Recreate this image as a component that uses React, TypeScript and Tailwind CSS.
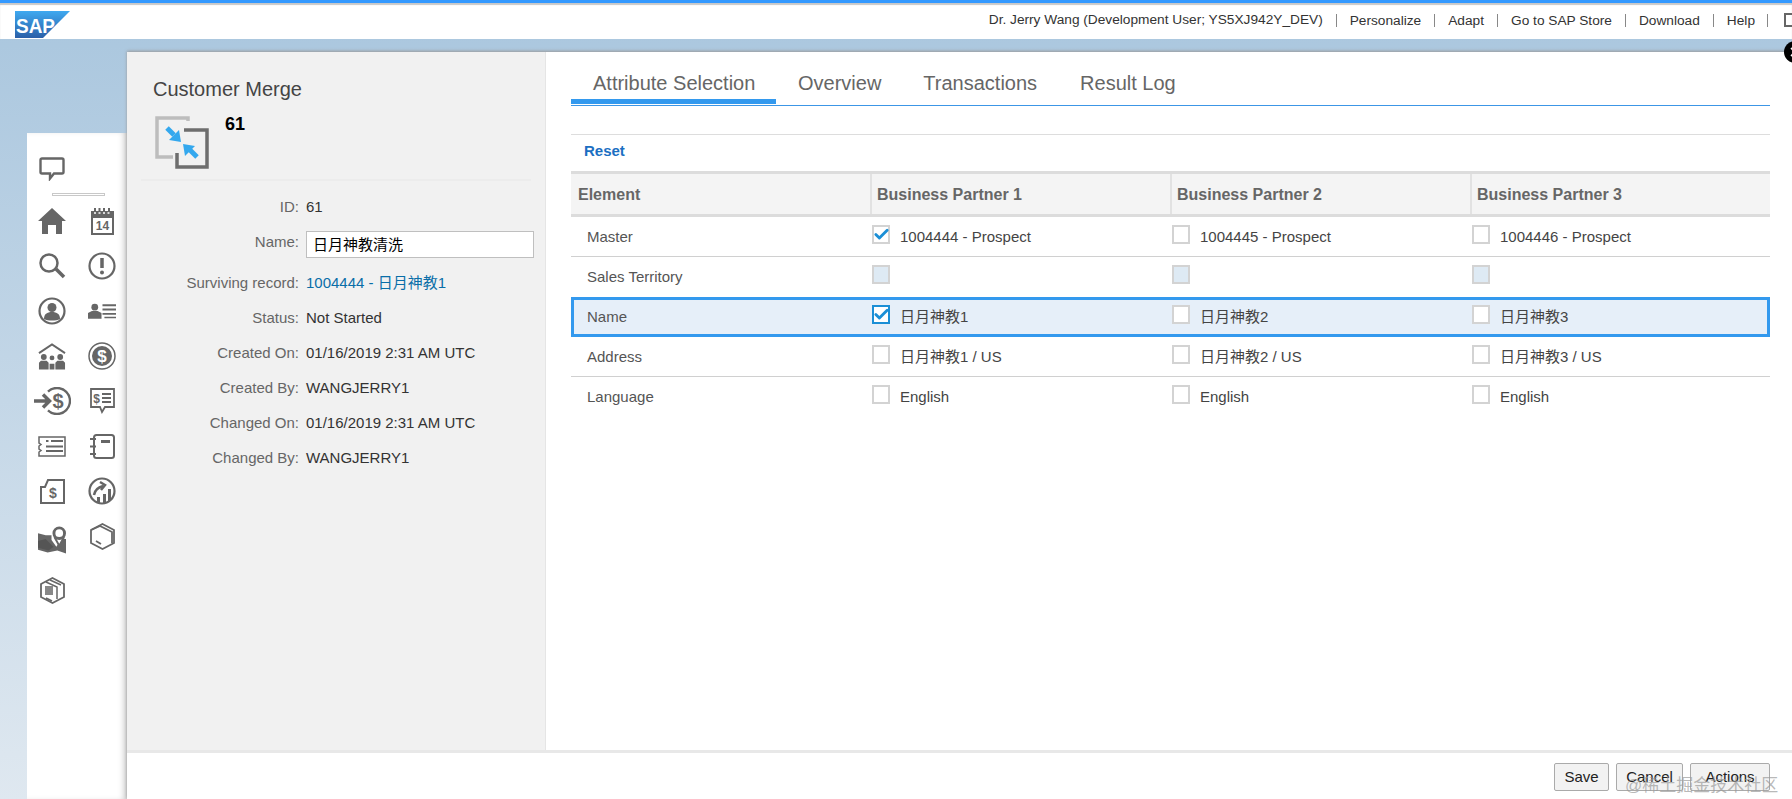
import { Check, X } from "lucide-react";

const fields = [
  { label: "ID:", value: "61" },
  { label: "Name:", input: "日月神教清洗" },
  { label: "Surviving record:", value: "1004444 - 日月神教1", link: true },
  { label: "Status:", value: "Not Started" },
  { label: "Created On:", value: "01/16/2019 2:31 AM UTC" },
  { label: "Created By:", value: "WANGJERRY1" },
  { label: "Changed On:", value: "01/16/2019 2:31 AM UTC" },
  { label: "Changed By:", value: "WANGJERRY1" },
];

const rows = [
  { name: "Master", cells: ["1004444 - Prospect", "1004445 - Prospect", "1004446 - Prospect"], checked: 0 },
  { name: "Sales Territory", cells: ["", "", ""], disabled: true },
  { name: "Name", cells: ["日月神教1", "日月神教2", "日月神教3"], checked: 0, selected: true },
  { name: "Address", cells: ["日月神教1 / US", "日月神教2 / US", "日月神教3 / US"] },
  { name: "Language", cells: ["English", "English", "English"] },
];

const headerLinks = ["Personalize", "Adapt", "Go to SAP Store", "Download", "Help"];

const Comment = () => (
  <svg width="26" height="24" viewBox="0 0 26 24" fill="none">
    <path d="M3 1.5h20a1.5 1.5 0 0 1 1.5 1.5v12a1.5 1.5 0 0 1-1.5 1.5h-8l-4 5v-5H3A1.5 1.5 0 0 1 1.5 15V3A1.5 1.5 0 0 1 3 1.5z" stroke="#666" strokeWidth="2.4" />
  </svg>
);

const icons = [
  <svg key="home" width="28" height="26" viewBox="0 0 28 26" fill="#666"><path d="M14 0 28 13h-4v13h-6v-9h-8v9H4V13H0z" /></svg>,
  <svg key="cal" width="23" height="27" viewBox="0 0 23 27" fill="none">
    <path d="M0 3h23v24H0z" fill="#666" /><path d="M2 10h19v15H2z" fill="#fff" />
    <path d="M4 0v6M8.500 0v6M13 0v6M18 0v6" stroke="#666" strokeWidth="2" />
    <path d="M3 5h17" stroke="#fff" strokeWidth="1.500" strokeDasharray="2 2.500" />
    <text x="11.500" y="22" textAnchor="middle" fontSize="12" fontWeight="700" fill="#666" fontFamily="Liberation Sans">14</text>
  </svg>,
  <svg key="search" width="27" height="26" viewBox="0 0 27 26" fill="none">
    <circle cx="10" cy="10" r="8.500" stroke="#666" strokeWidth="2.500" /><path d="M17 16l8 8" stroke="#666" strokeWidth="3.500" />
  </svg>,
  <svg key="alert" width="28" height="28" viewBox="0 0 28 28" fill="none">
    <circle cx="14" cy="14" r="12.500" stroke="#666" strokeWidth="2.200" /><path d="M14 6v10" stroke="#666" strokeWidth="3.500" /><circle cx="14" cy="20.500" r="2" fill="#666" />
  </svg>,
  <svg key="person" width="28" height="28" viewBox="0 0 28 28" fill="none">
    <circle cx="14" cy="14" r="12.500" stroke="#666" strokeWidth="2.200" /><circle cx="14" cy="10.500" r="4.500" fill="#666" /><path d="M6 22c0-5 3-7 8-7s8 2 8 7c-4 2-12 2-16 0z" fill="#666" />
  </svg>,
  <svg key="contacts" width="29" height="16" viewBox="0 0 29 16" fill="#666">
    <circle cx="7" cy="4" r="3.500" /><path d="M0 16V10l4-2h6l4 2v6z" />
    <path d="M15 1h14v2H15zM15 5.500h14v2H15zM15 10h14v2H15zM17 14h12v1.500H17z" />
  </svg>,
  <svg key="accounts" width="29" height="27" viewBox="0 0 29 27" fill="none">
    <path d="M1 10 14.500 1 28 10" stroke="#666" strokeWidth="2" />
    <g fill="#666"><circle cx="6" cy="14" r="3" /><circle cx="14.500" cy="15" r="2.500" /><circle cx="23" cy="14" r="3" /><path d="M1 27v-7l2-2h6l2 2v7zM12 27v-6h5v6zM18 27v-7l2-2h6l2 2v7z" /></g>
  </svg>,
  <svg key="dollar" width="28" height="28" viewBox="0 0 28 28" fill="none">
    <circle cx="14" cy="14" r="13" stroke="#666" strokeWidth="1.500" /><circle cx="14" cy="14" r="10" fill="#666" />
    <text x="14" y="20" textAnchor="middle" fontSize="17" fontWeight="700" fill="#fff" fontFamily="Liberation Sans">$</text>
  </svg>,
  <svg key="incoming" width="37" height="28" viewBox="0 0 37 28" fill="none" className="shrink-0">
    <path d="M0 14h15M9 7.500l6.500 6.500-6.500 6.500" stroke="#666" strokeWidth="3.500" />
    <path d="M14 4.600A13 13 0 1 1 14 23.400" stroke="#666" strokeWidth="2.400" />
    <text x="24" y="21" textAnchor="middle" fontSize="20" fontWeight="700" fill="#666" fontFamily="Liberation Sans">$</text>
  </svg>,
  <svg key="quote" width="25" height="26" viewBox="0 0 25 26" fill="none">
    <path d="M1 1h23v18h-9l-3 5-2-5H1z" stroke="#666" strokeWidth="1.800" />
    <text x="6.500" y="15" textAnchor="middle" fontSize="12" fontWeight="700" fill="#666" fontFamily="Liberation Sans">$</text>
    <path d="M12 6h9M12 10h9M12 14h9" stroke="#666" strokeWidth="1.800" />
  </svg>,
  <svg key="list" width="28" height="21" viewBox="0 0 28 21" fill="none">
    <path d="M1 1h26v19H1v-4l2-1.500L1 13v-3l2-1.500L1 7z" stroke="#666" strokeWidth="1.500" />
    <path d="M8 5h2.500M13 5h12M8 10.500h17M8 15h17" stroke="#666" strokeWidth="2" />
  </svg>,
  <svg key="notebook" width="25" height="25" viewBox="0 0 25 25" fill="none">
    <rect x="4" y="1" width="20" height="23" rx="2.500" stroke="#666" strokeWidth="2" />
    <path d="M0 5h6M0 12.500h6M0 20h6" stroke="#666" strokeWidth="2" /><path d="M11 6h9v3h-9z" fill="#666" />
  </svg>,
  <svg key="invoice" width="25" height="25" viewBox="0 0 25 25" fill="none">
    <path d="M8 1h16v23H1V8l4 0z" stroke="#666" strokeWidth="2" />
    <text x="13" y="19" textAnchor="middle" fontSize="14" fontWeight="700" fill="#666" fontFamily="Liberation Sans">$</text>
  </svg>,
  <svg key="growth" width="28" height="28" viewBox="0 0 28 28" fill="none">
    <circle cx="14" cy="14" r="12.500" stroke="#666" strokeWidth="2.200" />
    <path d="M6 18c1-6 5-8 9-9M12 5l5 3-4 5" stroke="#666" strokeWidth="2.500" />
    <path d="M9 20h3v6H9zM15 17h3v9h-3zM20 12h3v12h-3z" fill="#666" />
  </svg>,
  <svg key="map" width="29" height="29" viewBox="0 0 29 29" fill="none" className="mt-[6px]">
    <path d="M0 8l8 2 6 0v5l5 7 5-8 5 0v15l-9-3-10 2-10-3z" fill="#666" />
    <path d="M8 14l8 8-5 4-11-3V16z" fill="#555" />
    <path d="M17 12l5 9 5-9" stroke="#666" strokeWidth="2" fill="#fff" />
    <circle cx="22" cy="8" r="5.500" stroke="#666" strokeWidth="3" fill="#fff" />
  </svg>,
  <svg key="box" width="25" height="27" viewBox="0 0 25 27" fill="none">
    <path d="M12.500 1 24 7v13l-11.500 6L1 20V7z" stroke="#666" strokeWidth="1.800" />
    <path d="M1 7l9-4 12 6v11M6 18l5 3" stroke="#666" strokeWidth="1.800" />
  </svg>,
  <svg key="boxes" width="25" height="27" viewBox="0 0 25 27" fill="none" className="mt-[18px]">
    <path d="M12.500 1 24 7v13l-11.500 6L1 20V7z" stroke="#666" strokeWidth="1.800" />
    <path d="M6 5l11 5v12M10 3l11 5" stroke="#666" strokeWidth="1.500" /><path d="M5 9h8v9H5z" fill="#888" /><path d="M6 21l6 3" stroke="#666" strokeWidth="1.800" />
  </svg>,
];

const Box = ({ checked, disabled, focus }: { checked?: boolean; disabled?: boolean; focus?: boolean }) => (
  <span
    className={`mb-[5px] flex h-[19px] w-[18px] shrink-0 items-center justify-center border-2 ${
      focus ? "border-[#1b8fd6]" : "border-[#d3d3d3]"
    } ${disabled ? "bg-[#deeaf4]" : "bg-white"}`}
  >
    {checked && <Check size={17} strokeWidth={4} className="shrink-0 text-[#1b8fd6]" />}
  </span>
);

const App = () => {
  return (
    <div className="relative flex h-[799px] w-[1792px] flex-col overflow-hidden bg-gradient-to-b from-[#a9c6de] to-[#dfe8f0] font-['Liberation_Sans','Noto_Sans_CJK_SC',sans-serif]">
      {/* shell header */}
      <header className="flex h-[39px] shrink-0 items-start justify-between border-t-[3px] border-[#3399ff] bg-white shadow-[inset_0_2px_1px_#c8c8c8]">
        <svg width="55" height="27" viewBox="0 0 55 27" className="mt-[8px] ml-[15px]">
          <defs>
            <linearGradient id="sap" x1="0" y1="0" x2="0" y2="1">
              <stop offset="0" stopColor="#3fa9f0" />
              <stop offset="1" stopColor="#2a5fa8" />
            </linearGradient>
          </defs>
          <path d="M0 0h55L28 27H0z" fill="url(#sap)" />
          <text x="1" y="22" fontSize="21" fontWeight="700" fill="#fff" fontFamily="Liberation Sans" textLength="39" lengthAdjust="spacingAndGlyphs">SAP</text>
        </svg>
        <div className="flex h-[34px] items-center text-[13.7px] text-[#333]">
          <span>Dr. Jerry Wang (Development User; YS5XJ942Y_DEV)</span>
          {headerLinks.map((link) => (
            <span key={link} className="ml-[13px] border-l border-[#888] pl-[13px] leading-[13px]">{link}</span>
          ))}
          <span className="ml-[12px] h-[13px] border-l border-[#888]" />
          <span className="ml-[16px] h-[14px] w-[8px] border-2 border-r-0 border-[#666]" />
        </div>
      </header>

      <div className="flex min-h-0 flex-1 pt-[13px] pl-[27px]">
        {/* launchpad strip */}
        <aside className="mt-[81px] w-[100px] shrink-0 bg-white shadow-[inset_-6px_0_6px_-3px_#ccc]">
          <div className="pt-[24px] pl-[12px]"><Comment /></div>
          <div className="mt-[12px] ml-[25px] h-[3px] w-[53px] border border-[#c8c8c8]" />
          <div className="mt-[11px] grid grid-cols-[28px_28px] auto-rows-[45px] gap-x-[22px] pl-[11px]">
            {icons.map((icon, i) => (
              <div key={i} className="flex h-[28px] items-center justify-center">{icon}</div>
            ))}
          </div>
        </aside>

        {/* merge dialog */}
        <main className="flex min-w-0 flex-1 flex-col bg-white shadow-[0_-1px_3px_#999]">
          <div className="flex min-h-0 flex-1">
            <section className="w-[419px] shrink-0 border-r border-[#e5e5e5] bg-[#f1f1f1] px-[14px]">
              <h1 className="pt-[26px] pl-[12px] text-xl leading-[22px] text-[#444]">Customer Merge</h1>
              <div className="mt-[16px] flex h-[65px] border-b-2 border-[#ececec] pl-[14px]">
                <svg width="54" height="54" viewBox="0 0 54 54" fill="none">
                  <path d="M33 5V2H2v39h16" stroke="#bdbdbd" strokeWidth="3.500" />
                  <path d="M29 14h23v37H22V37" stroke="#6e6e6e" strokeWidth="3.500" />
                  <path d="M12 12l7 7" stroke="#34a8ee" strokeWidth="5" />
                  <path d="M26 26l-12-2 10-10z" fill="#34a8ee" />
                  <path d="M42 41l-7-7" stroke="#34a8ee" strokeWidth="5" />
                  <path d="M28 28l12 2-10 10z" fill="#34a8ee" />
                </svg>
                <span className="pl-[16px] text-lg leading-[16px] font-bold text-black">61</span>
              </div>
              <dl className="pt-[8px] text-[15px] leading-[35px]">
                {fields.map((f) => (
                  <div key={f.label} className={`flex items-start ${f.input ? "h-[41px]" : "h-[35px]"}`}>
                    <dt className="w-[159px] shrink-0 pr-[1px] text-right text-[#666]">{f.label}</dt>
                    <dd className={`ml-[6px] shrink-0 ${f.link ? "text-[#0a6ea8]" : "text-[#333]"}`}>
                      {f.input ? (
                        <div className="mt-[7px] h-[27px] w-[228px] border border-[#bfbfbf] bg-white pl-[6px] leading-[25px] text-black">{f.input}</div>
                      ) : (
                        f.value
                      )}
                    </dd>
                  </div>
                ))}
              </dl>
            </section>

            <section className="min-w-0 flex-1 pt-[15px] pl-[25px] pr-[22px] text-[15px]">
              <nav className="flex h-[39px] border-b border-[#3c96e6] text-xl leading-[32px] text-[#666]">
                <div className="h-[37px] w-[205px] border-b-[5px] border-[#3399ee] pl-[22px]">Attribute Selection</div>
                <div className="ml-[22px]">Overview</div>
                <div className="ml-[42px]">Transactions</div>
                <div className="ml-[43px]">Result Log</div>
              </nav>
              <div className="mt-[28px] flex h-[37px] items-center border-t border-[#ddd] pb-[4px] pl-[13px] font-bold text-[#1b6fc2]">Reset</div>
              <div className="grid h-[46px] grid-cols-[299px_300px_300px_300px] border-y-[3px] border-[#dcdcdc] bg-[#f4f4f4] text-base font-bold text-[#666]">
                {["Element", "Business Partner 1", "Business Partner 2", "Business Partner 3"].map((h, i) => (
                  <div key={h} className={`flex items-center pt-[1px] ${i > 0 ? "border-l-2 border-[#e2e2e2] pl-[5px]" : "pl-[7px]"}`}>{h}</div>
                ))}
              </div>
              {rows.map((row) => (
                <div
                  key={row.name}
                  className={`grid h-[40px] items-center ${
                    row.selected
                      ? "grid-cols-[296px_300px_300px_297px] border-[3px] border-[#3399ee] bg-[#e6eff9]"
                      : row.name === "Master" || row.name === "Address"
                        ? "grid-cols-[299px_300px_300px_300px] border-b border-[#d0d0d0] pt-[1px]"
                        : "grid-cols-[299px_300px_300px_300px]"
                  }`}
                >
                  <div className={`text-[#555] ${row.selected ? "pl-[13px]" : "pl-[16px]"}`}>{row.name}</div>
                  {row.cells.map((cell, i) => (
                    <div key={i} className="flex items-center gap-[10px] pl-[2px] text-[#444]">
                      <Box checked={row.checked === i} disabled={row.disabled} focus={row.selected && row.checked === i} />
                      {cell && <span>{cell}</span>}
                    </div>
                  ))}
                </div>
              ))}
            </section>
          </div>

          <footer className="flex h-[49px] shrink-0 items-start justify-end gap-[7px] border-t-[3px] border-[#e8e8e8] pt-[10px] pr-[22px] text-[15px] text-[#222]">
            <button className="h-[28px] w-[55px] rounded-[2px] border border-[#aaa] bg-[#f2f2f2]">Save</button>
            <button className="h-[28px] w-[67px] rounded-[2px] border border-[#aaa] bg-[#f2f2f2]">Cancel</button>
            <button className="h-[28px] w-[80px] rounded-[2px] border border-[#aaa] bg-[#f2f2f2]">Actions</button>
          </footer>
        </main>
      </div>

      {/* clipped close button */}
      <span className="absolute top-[41px] left-[1784px] flex h-[22px] w-[22px] items-center justify-center rounded-full bg-black">
        <X size={14} strokeWidth={3} className="text-white" />
      </span>
      {/* watermark */}
      <span className="absolute top-[773px] left-[1625px] text-[17px] whitespace-nowrap text-[#9a9a9a]/70">@稀土掘金技术社区</span>
    </div>
  );
};

export default App;
